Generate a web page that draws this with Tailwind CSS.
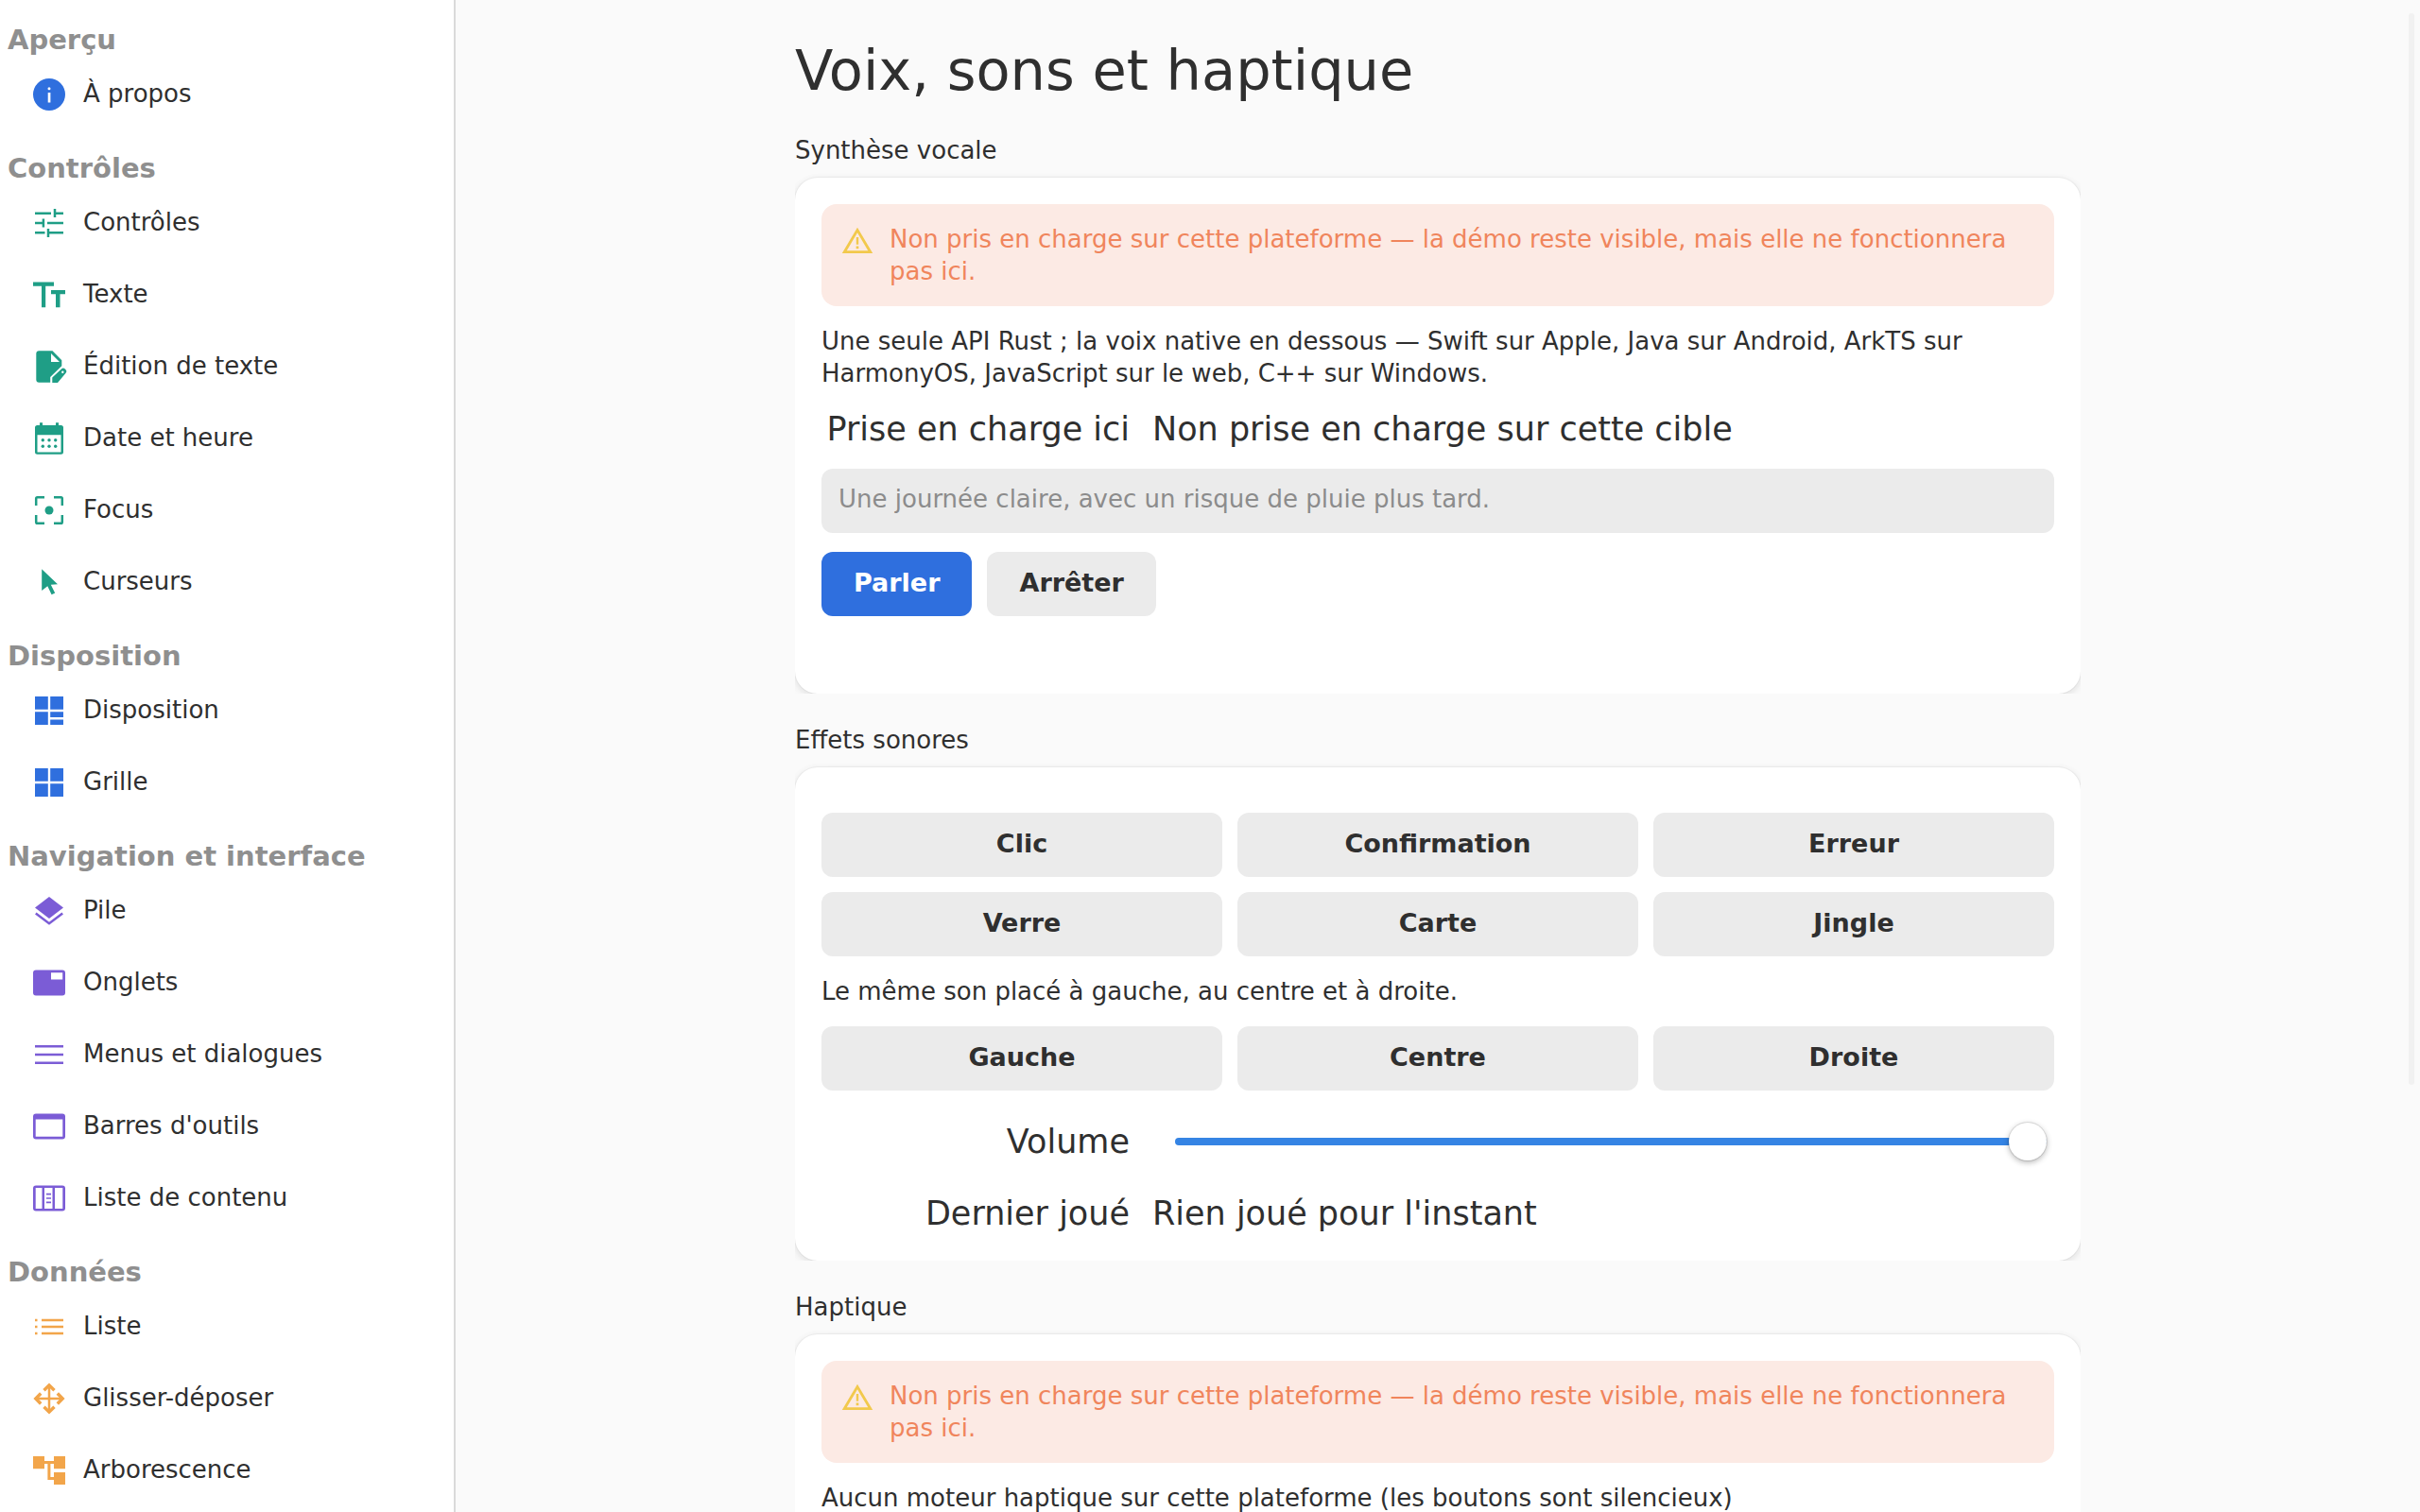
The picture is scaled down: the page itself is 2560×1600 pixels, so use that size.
<!DOCTYPE html>
<html lang="fr">
<head>
    <meta charset="UTF-8">
    <meta name="viewport" content="width=device-width, initial-scale=1.0">
    <title>Voix, sons et haptique</title>
    <script src="https://cdn.jsdelivr.net/npm/@tailwindcss/browser@4"></script>
</head>
<body class="flex h-screen overflow-hidden bg-[#fafafa] font-['DejaVu_Sans',sans-serif] text-[26px] leading-[34px] text-[#2f2f2f]">

    <!-- Sidebar -->
    <nav class="w-[482px] shrink-0 overflow-hidden border-r-2 border-[#dadada] bg-white pt-0.5">
        <h2 class="h-[60px] px-2 pt-[22px] text-[29px] leading-9 font-bold text-[#8f8f8f]">Aperçu</h2>
        <ul class="text-[#2f6fde]">
            <li>
                <a href="#a-propos" class="flex h-[76px] items-center gap-4 px-8">
                    <svg class="size-10 shrink-0" viewBox="0 0 40 40" fill="currentColor"><path fill-rule="evenodd" d="M20 3a17 17 0 1 0 0 34a17 17 0 1 0 0-34zM18.7 18h2.700v10.500h-2.700zM20 12.300a1.500 1.500 0 1 1 0 3a1.500 1.500 0 1 1 0-3z"/></svg>
                    <span class="pb-0.5 text-[#2f2f2f]">À propos</span>
                </a>
            </li>
        </ul>

        <h2 class="h-[60px] px-2 pt-[22px] text-[29px] leading-9 font-bold text-[#8f8f8f]">Contrôles</h2>
        <ul class="text-[#1f9e86]">
            <li>
                <a href="#controles" class="flex h-[76px] items-center gap-4 px-8">
                    <svg class="size-10 shrink-0" viewBox="0 0 40 40" fill="none" stroke="currentColor" stroke-width="2.5"><path d="M5 9.700h17M26 5v9M26 9.700h9M5 20h9M13.900 15.500v9M18 20h17M5 30.300h10.500M19 26v9M19 30.300h16"/></svg>
                    <span class="pb-0.5 text-[#2f2f2f]">Contrôles</span>
                </a>
            </li>
            <li>
                <a href="#texte" class="flex h-[76px] items-center gap-4 px-8">
                    <svg class="size-10 shrink-0" viewBox="0 0 40 40" fill="currentColor"><path d="M3 6.600h22v4.200h-8.800v22.500H12V10.800H3zM22 15h15v4.200h-5.500v14.100h-4.500V19.200H22z"/></svg>
                    <span class="pb-0.5 text-[#2f2f2f]">Texte</span>
                </a>
            </li>
            <li>
                <a href="#edition" class="flex h-[76px] items-center gap-4 px-8">
                    <svg class="size-10 shrink-0" viewBox="0 0 40 40" fill="currentColor"><path fill-rule="evenodd" d="M9.300 3.200H23.500L33.300 13.200V19.300L21.200 31V36.800H9.300a3 3 0 0 1-3-3V6.200a3 3 0 0 1 3-3zM22 6v9h9zM23.300 37V31.500L33.200 22.200a2.500 2.500 0 0 1 3.400 0l1 1.100a2.500 2.500 0 0 1 0 3.500L29 37zM34.300 24.500a1.200 1.200 0 1 0 0 2.400a1.200 1.200 0 1 0 0-2.400z"/></svg>
                    <span class="pb-0.5 text-[#2f2f2f]">Édition de texte</span>
                </a>
            </li>
            <li>
                <a href="#date" class="flex h-[76px] items-center gap-4 px-8">
                    <svg class="size-10 shrink-0" viewBox="0 0 40 40" fill="currentColor"><path fill-rule="evenodd" d="M10 6V3.200h3V6h14V3.200h3V6h2.500A2.500 2.500 0 0 1 35 8.500V34.300a2.500 2.500 0 0 1-2.500 2.500h-25A2.500 2.500 0 0 1 5 34.300V8.500A2.500 2.500 0 0 1 7.500 6zM7.500 16.200v18.200h25V16.200z"/><circle cx="13.300" cy="21.700" r="1.700"/><circle cx="20" cy="21.700" r="1.700"/><circle cx="26.700" cy="21.700" r="1.700"/><circle cx="13.300" cy="28.300" r="1.700"/><circle cx="20" cy="28.300" r="1.700"/><circle cx="26.700" cy="28.300" r="1.700"/></svg>
                    <span class="pb-0.5 text-[#2f2f2f]">Date et heure</span>
                </a>
            </li>
            <li>
                <a href="#focus" class="flex h-[76px] items-center gap-4 px-8">
                    <svg class="size-10 shrink-0" viewBox="0 0 40 40" fill="none" stroke="currentColor" stroke-width="2.5"><path d="M6.200 15V7.500a1.300 1.300 0 0 1 1.300-1.300H15M25 6.200h7.500a1.300 1.300 0 0 1 1.300 1.300V15M33.800 25v7.500a1.300 1.300 0 0 1-1.300 1.300H25M15 33.800H7.500a1.300 1.300 0 0 1-1.300-1.300V25"/><circle cx="20" cy="20" r="4.500" fill="currentColor" stroke="none"/></svg>
                    <span class="pb-0.5 text-[#2f2f2f]">Focus</span>
                </a>
            </li>
            <li>
                <a href="#curseurs" class="flex h-[76px] items-center gap-4 px-8">
                    <svg class="size-10 shrink-0" viewBox="0 0 40 40" fill="currentColor"><path d="M12.200 6.200L29 22.200L21.800 22.700L26.200 31.600L22.600 33.200L18.300 24.300L12.200 29z"/></svg>
                    <span class="pb-0.5 text-[#2f2f2f]">Curseurs</span>
                </a>
            </li>
        </ul>

        <h2 class="h-[60px] px-2 pt-[22px] text-[29px] leading-9 font-bold text-[#8f8f8f]">Disposition</h2>
        <ul class="text-[#2f6fde]">
            <li>
                <a href="#disposition" class="flex h-[76px] items-center gap-4 px-8">
                    <svg class="size-10 shrink-0" viewBox="0 0 40 40" fill="currentColor"><path d="M5 5h13.800v13.800H5zM21.200 5H35v13.800H21.200zM5 21.200h13.800V35H5zM21.200 21.200H35V27H21.200zM21.200 29.500H35V35H21.200z"/></svg>
                    <span class="pb-0.5 text-[#2f2f2f]">Disposition</span>
                </a>
            </li>
            <li>
                <a href="#grille" class="flex h-[76px] items-center gap-4 px-8">
                    <svg class="size-10 shrink-0" viewBox="0 0 40 40" fill="currentColor"><path d="M5 5h13.800v13.800H5zM21.200 5H35v13.800H21.200zM5 21.200h13.800V35H5zM21.200 21.200H35V35H21.200z"/></svg>
                    <span class="pb-0.5 text-[#2f2f2f]">Grille</span>
                </a>
            </li>
        </ul>

        <h2 class="h-[60px] px-2 pt-[22px] text-[29px] leading-9 font-bold text-[#8f8f8f]">Navigation et interface</h2>
        <ul class="text-[#7b5cd6]">
            <li>
                <a href="#pile" class="flex h-[76px] items-center gap-4 px-8">
                    <svg class="size-10 shrink-0" viewBox="0 0 40 40" fill="currentColor"><path d="M20 5L35 16.500L20 28L5 16.500z"/><path d="M5.800 22.500L20 33.200L34.200 22.500" fill="none" stroke="currentColor" stroke-width="2.5"/></svg>
                    <span class="pb-0.5 text-[#2f2f2f]">Pile</span>
                </a>
            </li>
            <li>
                <a href="#onglets" class="flex h-[76px] items-center gap-4 px-8">
                    <svg class="size-10 shrink-0" viewBox="0 0 40 40" fill="currentColor"><path fill-rule="evenodd" d="M6 6.600H34a3 3 0 0 1 3 3V30.400a3 3 0 0 1-3 3H6a3 3 0 0 1-3-3V9.600a3 3 0 0 1 3-3zM22 9.200v7.200h12.200V9.200z"/></svg>
                    <span class="pb-0.5 text-[#2f2f2f]">Onglets</span>
                </a>
            </li>
            <li>
                <a href="#menus" class="flex h-[76px] items-center gap-4 px-8">
                    <svg class="size-10 shrink-0" viewBox="0 0 40 40" fill="none" stroke="currentColor" stroke-width="2.5"><path d="M5 11.300h30M5 20h30M5 28.700h30"/></svg>
                    <span class="pb-0.5 text-[#2f2f2f]">Menus et dialogues</span>
                </a>
            </li>
            <li>
                <a href="#barres" class="flex h-[76px] items-center gap-4 px-8">
                    <svg class="size-10 shrink-0" viewBox="0 0 40 40" fill="currentColor"><path fill-rule="evenodd" d="M6 6.600H34a3 3 0 0 1 3 3V30.400a3 3 0 0 1-3 3H6a3 3 0 0 1-3-3V9.600a3 3 0 0 1 3-3zM5.700 12.500v18.300h28.600V12.500z"/></svg>
                    <span class="pb-0.5 text-[#2f2f2f]">Barres d'outils</span>
                </a>
            </li>
            <li>
                <a href="#liste-contenu" class="flex h-[76px] items-center gap-4 px-8">
                    <svg class="size-10 shrink-0" viewBox="0 0 40 40" fill="currentColor"><path fill-rule="evenodd" d="M6 6.600H34a3 3 0 0 1 3 3V30.400a3 3 0 0 1-3 3H6a3 3 0 0 1-3-3V9.600a3 3 0 0 1 3-3zM5.700 9.100v21.800h6.800V9.100zM15 9.100v21.800h8.500V9.100zM26 9.100v21.800h8.300V9.100z"/><path d="M17 15.700h5M17 20h5M17 24.300h5" stroke="currentColor" stroke-width="1.700"/></svg>
                    <span class="pb-0.5 text-[#2f2f2f]">Liste de contenu</span>
                </a>
            </li>
        </ul>

        <h2 class="h-[60px] px-2 pt-[22px] text-[29px] leading-9 font-bold text-[#8f8f8f]">Données</h2>
        <ul class="text-[#f2a54a]">
            <li>
                <a href="#liste" class="flex h-[76px] items-center gap-4 px-8">
                    <svg class="size-10 shrink-0" viewBox="0 0 40 40" fill="none" stroke="currentColor" stroke-width="2.500"><path d="M5 13h2.500M12 13h23M5 20h2.500M12 20h23M5 27h2.500M12 27h23"/></svg>
                    <span class="pb-0.5 text-[#2f2f2f]">Liste</span>
                </a>
            </li>
            <li>
                <a href="#glisser" class="flex h-[76px] items-center gap-4 px-8">
                    <svg class="size-10 shrink-0" viewBox="0 0 40 40" fill="none" stroke="currentColor"><path stroke-width="2.500" d="M20 5v30M5 20h30"/><path stroke-width="3.400" d="M14.500 11.200L20 5.800L25.500 11.200M14.500 28.800L20 34.200L25.500 28.800M11.200 14.500L5.800 20L11.200 25.500M28.800 14.500L34.200 20L28.800 25.500"/></svg>
                    <span class="pb-0.5 text-[#2f2f2f]">Glisser-déposer</span>
                </a>
            </li>
            <li>
                <a href="#arborescence" class="flex h-[76px] items-center gap-4 px-8">
                    <svg class="size-10 shrink-0" viewBox="0 0 40 40" fill="currentColor"><path d="M3 5h12v13.200H3zM25 5h12v13.200H25zM25 22h12v13H25z"/><path d="M15 11.500h10M19.900 11.500V28.500H25" fill="none" stroke="currentColor" stroke-width="3"/></svg>
                    <span class="pb-0.5 text-[#2f2f2f]">Arborescence</span>
                </a>
            </li>
        </ul>
    </nav>

    <!-- Main content -->
    <main class="relative flex-1 overflow-hidden">
        <div class="mx-auto flex max-w-[1360px] flex-col gap-8 pt-10">
            <h1 class="text-[59px] leading-[70px]">Voix, sons et haptique</h1>

            <section class="flex flex-col gap-3 overflow-hidden">
                <h2>Synthèse vocale</h2>
                <div class="flex flex-col gap-5 rounded-3xl bg-white p-7 shadow-[0_0_0_1px_rgba(0,0,6,0.03),0_2px_6px_1px_rgba(0,0,6,0.08),0_4px_12px_4px_rgba(0,0,6,0.02)]">
                    <div role="alert" class="flex gap-4 rounded-2xl bg-[#fceae4] p-5 text-[#f0855c]">
                        <svg class="mt-0.5 size-9 shrink-0 text-[#f2c94c]" viewBox="0 0 24 24" fill="currentColor"><path fill-rule="evenodd" d="M1.200 20L12 1.800L22.800 20zM4.500 18.100H19.500L12 5.500zM11.200 8.700h1.600v5.100h-1.600zM11.100 15h1.800v1.800h-1.800z"/></svg>
                        <p>Non pris en charge sur cette plateforme — la démo reste visible, mais elle ne fonctionnera pas ici.</p>
                    </div>
                    <p>Une seule API Rust ; la voix native en dessous — Swift sur Apple, Java sur Android, ArkTS sur<br>HarmonyOS, JavaScript sur le web, C++ sur Windows.</p>
                    <div class="flex gap-6 text-[35px] leading-[44px]">
                        <span class="w-[326px] shrink-0 text-right whitespace-nowrap">Prise en charge ici</span>
                        <span>Non prise en charge sur cette cible</span>
                    </div>
                    <input type="text" aria-label="Texte à prononcer" placeholder="Une journée claire, avec un risque de pluie plus tard." class="h-[68px] w-full rounded-xl bg-[#ebebeb] px-[18px] pb-1 placeholder:text-[#8c8c8c]">
                    <div class="flex gap-4 text-[27px]">
                        <button type="button" class="h-[68px] rounded-xl bg-[#2f6fde] px-[34px] pb-0.5 font-bold text-white">Parler</button>
                        <button type="button" class="h-[68px] rounded-xl bg-[#ebebeb] px-[34px] pb-0.5 font-bold">Arrêter</button>
                    </div>
                    <div role="status" class="h-[34px]"></div>
                </div>
            </section>

            <section class="flex flex-col gap-3 overflow-hidden">
                <h2>Effets sonores</h2>
                <div class="flex flex-col gap-5 rounded-3xl bg-white p-7 pt-12 shadow-[0_0_0_1px_rgba(0,0,6,0.03),0_2px_6px_1px_rgba(0,0,6,0.08),0_4px_12px_4px_rgba(0,0,6,0.02)]">
                    <div class="grid grid-cols-3 gap-4 text-[27px]">
                        <button type="button" class="h-[68px] rounded-xl bg-[#ebebeb] pb-0.5 font-bold">Clic</button>
                        <button type="button" class="h-[68px] rounded-xl bg-[#ebebeb] pb-0.5 font-bold">Confirmation</button>
                        <button type="button" class="h-[68px] rounded-xl bg-[#ebebeb] pb-0.5 font-bold">Erreur</button>
                        <button type="button" class="h-[68px] rounded-xl bg-[#ebebeb] pb-0.5 font-bold">Verre</button>
                        <button type="button" class="h-[68px] rounded-xl bg-[#ebebeb] pb-0.5 font-bold">Carte</button>
                        <button type="button" class="h-[68px] rounded-xl bg-[#ebebeb] pb-0.5 font-bold">Jingle</button>
                    </div>
                    <p>Le même son placé à gauche, au centre et à droite.</p>
                    <div class="grid grid-cols-3 gap-4 text-[27px]">
                        <button type="button" class="h-[68px] rounded-xl bg-[#ebebeb] pb-0.5 font-bold">Gauche</button>
                        <button type="button" class="h-[68px] rounded-xl bg-[#ebebeb] pb-0.5 font-bold">Centre</button>
                        <button type="button" class="h-[68px] rounded-xl bg-[#ebebeb] pb-0.5 font-bold">Droite</button>
                    </div>
                    <div class="flex h-[68px] items-center gap-12 pr-2 text-[35px] leading-[44px]">
                        <label for="volume" class="w-[326px] shrink-0 text-right">Volume</label>
                        <input id="volume" type="range" min="0" max="100" value="100" class="h-10 min-w-0 flex-1 appearance-none bg-transparent [&::-webkit-slider-runnable-track]:h-2 [&::-webkit-slider-runnable-track]:rounded-full [&::-webkit-slider-runnable-track]:bg-[#3584e4] [&::-webkit-slider-thumb]:-mt-4 [&::-webkit-slider-thumb]:size-10 [&::-webkit-slider-thumb]:appearance-none [&::-webkit-slider-thumb]:rounded-full [&::-webkit-slider-thumb]:bg-white [&::-webkit-slider-thumb]:shadow-[0_0_0_1px_rgba(0,0,0,0.1),0_2px_6px_rgba(0,0,0,0.3)]">
                    </div>
                    <div class="flex gap-6 text-[35px] leading-[44px]">
                        <span class="w-[326px] shrink-0 text-right">Dernier joué</span>
                        <span>Rien joué pour l'instant</span>
                    </div>
                </div>
            </section>

            <section class="flex flex-col gap-3 overflow-hidden">
                <h2>Haptique</h2>
                <div class="flex flex-col gap-5 rounded-3xl bg-white p-7 shadow-[0_0_0_1px_rgba(0,0,6,0.03),0_2px_6px_1px_rgba(0,0,6,0.08),0_4px_12px_4px_rgba(0,0,6,0.02)]">
                    <div role="alert" class="flex gap-4 rounded-2xl bg-[#fceae4] p-5 text-[#f0855c]">
                        <svg class="mt-0.5 size-9 shrink-0 text-[#f2c94c]" viewBox="0 0 24 24" fill="currentColor"><path fill-rule="evenodd" d="M1.200 20L12 1.800L22.800 20zM4.500 18.100H19.500L12 5.500zM11.200 8.700h1.600v5.100h-1.600zM11.100 15h1.800v1.800h-1.800z"/></svg>
                        <p>Non pris en charge sur cette plateforme — la démo reste visible, mais elle ne fonctionnera pas ici.</p>
                    </div>
                    <p>Aucun moteur haptique sur cette plateforme (les boutons sont silencieux)</p>
                </div>
            </section>
        </div>

        <!-- Overlay scroll indicator -->
        <div class="absolute top-3.5 right-1.5 h-[1134px] w-1.5 rounded-full bg-[#f1f1f1]"></div>
    </main>
</body>
</html>
